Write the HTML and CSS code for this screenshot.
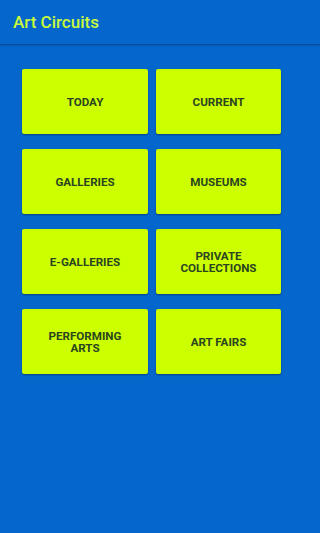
FILE: index.html
```html
<!DOCTYPE html>
<html>
<head>
<meta charset="utf-8">
<link rel="stylesheet" href="styles.css">
</head>
<body>
<header class="toolbar"><h1 class="title">Art Circuits</h1></header>
<main class="grid">
  <button class="tile">TODAY</button>
  <button class="tile">CURRENT</button>
  <button class="tile">GALLERIES</button>
  <button class="tile">MUSEUMS</button>
  <button class="tile">E-GALLERIES</button>
  <button class="tile">PRIVATE<br>COLLECTIONS</button>
  <button class="tile">PERFORMING<br>ARTS</button>
  <button class="tile">ART FAIRS</button>
</main>
</body>
</html>
```
FILE: styles.css
```css
html, body {
  margin: 0;
  padding: 0;
  height: 100%;
  background: #0566cc;
  font-family: Roboto, "Liberation Sans", sans-serif;
}
.toolbar {
  height: 44px;
  display: flex;
  align-items: center;
  padding-left: 13px;
  background: #0566cc;
  box-shadow: 0 1px 2px rgba(0, 0, 0, 0.35);
  position: relative;
}
.title {
  margin: 0;
  font-size: 17px;
  font-weight: 500;
  color: #c9fb3c;
  letter-spacing: 0;
}
.grid {
  display: grid;
  grid-template-columns: 126px 125px;
  grid-auto-rows: 65px;
  column-gap: 8px;
  row-gap: 15px;
  padding: 25px 0 0 22px;
}
.tile {
  border: none;
  border-radius: 2px;
  background: #ccff00;
  color: #2a4520;
  font-family: Roboto, "Liberation Sans", sans-serif;
  font-size: 11.6px;
  font-weight: 700;
  line-height: 11.5px;
  padding: 2px 0 0 0;
  box-shadow: 0 1px 2px rgba(0, 0, 0, 0.35);
}
```
